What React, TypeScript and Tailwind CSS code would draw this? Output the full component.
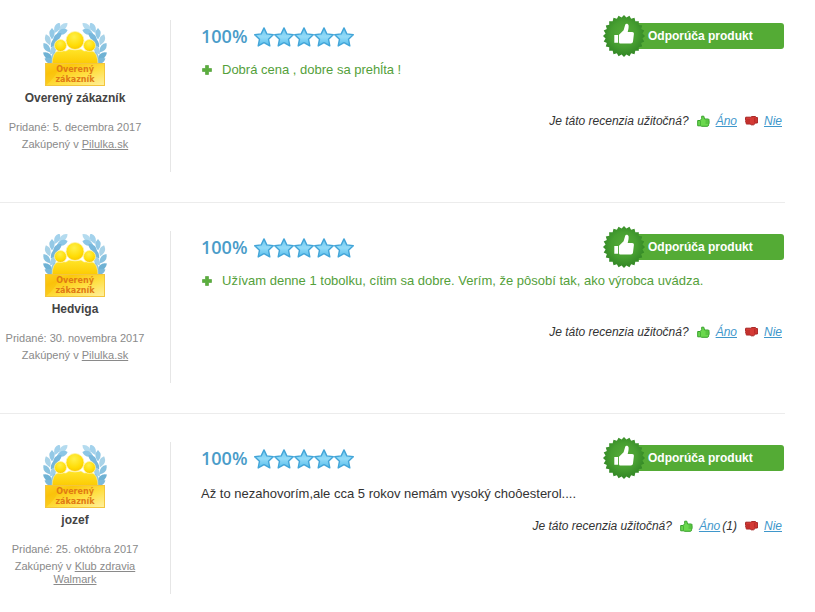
import React from 'react';

interface Review {
  id: number;
  name: string;
  added: string;
  shop: string;
  rating: number;
  pros?: string;
  text?: string;
  yesVotes?: number;
}

const REVIEWS: Review[] = [
  {
    id: 1,
    name: 'Overený zákazník',
    added: '5. decembra 2017',
    shop: 'Pilulka.sk',
    rating: 100,
    pros: 'Dobrá cena , dobre sa prehĺta !',
  },
  {
    id: 2,
    name: 'Hedviga',
    added: '30. novembra 2017',
    shop: 'Pilulka.sk',
    rating: 100,
    pros: 'Užívam denne 1 tobolku, cítim sa dobre. Verím, že pôsobí tak, ako výrobca uvádza.',
  },
  {
    id: 3,
    name: 'jozef',
    added: '25. októbra 2017',
    shop: 'Klub zdravia Walmark',
    rating: 100,
    text: 'Až to nezahovorím,ale cca 5 rokov nemám vysoký choôesterol....',
    yesVotes: 1,
  },
];

// One side of the laurel wreath: [x, y, rotation, fill]
const LEAVES: [number, number, number, string][] = [
  [20, 4, 50, '#b4dbef'],
  [14, 5, 25, '#a3d2ec'],
  [19, 9, 70, '#8cc6e6'],
  [9, 11, 0, '#93c9e6'],
  [14, 14, 50, '#79b8dc'],
  [5, 17, -20, '#a9d3e8'],
  [11, 20, 35, '#76b6da'],
  [4, 25, -35, '#8ac3e0'],
  [10, 27, 30, '#9fcfe8'],
  [5, 33, -55, '#6fb2d4'],
  [11, 34, 10, '#8fc6e4'],
  [7, 38, -65, '#7cb9d8'],
];

const Laurel: React.FC = () => (
  <>
    {LEAVES.map(([x, y, angle, fill]) => (
      <path
        key={`${x}-${y}`}
        d="M0 -6Q5.500 -1 0 5.500Q-5.500 -1 0 -6Z"
        fill={fill}
        transform={`translate(${x} ${y}) rotate(${angle})`}
      />
    ))}
  </>
);

const VerifiedBadge: React.FC = () => (
  <svg width="64" height="64" viewBox="0 0 64 64" role="img" aria-label="Overený zákazník">
    <defs>
      <radialGradient id="head" cx="0.45" cy="0.3" r="0.7">
        <stop offset="0" stopColor="#fff04a" />
        <stop offset="0.7" stopColor="#ffdc05" />
        <stop offset="1" stopColor="#f9c800" />
      </radialGradient>
      <linearGradient id="body" x1="0" y1="0" x2="0" y2="1">
        <stop offset="0" stopColor="#ffe528" />
        <stop offset="1" stopColor="#fcc800" />
      </linearGradient>
      <linearGradient id="ribbon" x1="0" y1="0" x2="1" y2="1">
        <stop offset="0" stopColor="#ffdf35" />
        <stop offset="0.25" stopColor="#fbc70c" />
        <stop offset="0.6" stopColor="#ffe045" />
        <stop offset="1" stopColor="#fff0a0" />
      </linearGradient>
    </defs>
    <Laurel />
    <g transform="translate(64 0) scale(-1 1)">
      <Laurel />
    </g>
    <path
      d="M9 42q0-13 7-14.500l7 .5 3-2q6 2 12 0l3 2 7-.5q7 1.500 7 14.500z"
      fill="url(#body)"
      stroke="#fff3a8"
      strokeWidth="0.6"
    />
    <circle cx="17.500" cy="22.500" r="6" fill="url(#head)" stroke="#fff3a8" strokeWidth="0.8" />
    <circle cx="46.500" cy="22.500" r="6" fill="url(#head)" stroke="#fff3a8" strokeWidth="0.8" />
    <circle cx="32" cy="17.500" r="9" fill="url(#head)" stroke="#fff3a8" strokeWidth="0.8" />
    <rect x="2.5" y="40.5" width="59" height="22" fill="url(#ribbon)" stroke="#f3c53c" />
    <path d="M3 62V41h14Q13 55 3 62z" fill="#f9bd08" opacity="0.5" />
    <g
      textAnchor="middle"
      fontSize="8"
      fontWeight="700"
      fill="#e07a14"
      fontFamily="'DejaVu Sans', sans-serif"
    >
      <text x="32" y="49">Overený</text>
      <text x="32" y="59">zákazník</text>
    </g>
  </svg>
);

const Stars: React.FC = () => (
  <svg width="100" height="22" viewBox="0 0 100 22" aria-hidden="true">
    <defs>
      <linearGradient id="star" x1="0" y1="0" x2="0" y2="1">
        <stop offset="0" stopColor="#6cc6ee" />
        <stop offset="0.5" stopColor="#93dbf8" />
        <stop offset="1" stopColor="#55bdec" />
      </linearGradient>
    </defs>
    {[0, 20, 40, 60, 80].map((x) => (
      <path
        key={x}
        d="M10 .9l2.800 6 6.500.8-4.800 4.500 1.300 6.700-5.800-3.300-5.800 3.300 1.300-6.700L.7 7.700l6.500-.8z"
        transform={`translate(${x} 2)`}
        fill="url(#star)"
        stroke="#43a5d8"
        strokeWidth="1.4"
        strokeLinejoin="round"
      />
    ))}
  </svg>
);

const PlusIcon: React.FC = () => (
  <svg width="10" height="10" viewBox="0 0 10 10" className="shrink-0" aria-hidden="true">
    <path d="M3.5 0.5h3v3h3v3h-3v3h-3v-3h-3v-3h3z" fill="#5aae3d" stroke="#4c9c31" strokeWidth="0.6" />
  </svg>
);

// Outline of the round seal with pointed teeth
const sealPoints = Array.from({ length: 48 }, (_, i) => {
  const r = i % 2 === 0 ? 21 : 18.6;
  const a = (i * Math.PI) / 24;
  return `${(21 + r * Math.cos(a)).toFixed(2)},${(21 + r * Math.sin(a)).toFixed(2)}`;
}).join(' ');

const Seal: React.FC = () => (
  <svg width="42" height="42" viewBox="0 0 42 42" className="absolute -top-2 -left-[21px]" aria-hidden="true">
    <defs>
      <radialGradient id="seal" cx="0.5" cy="0.45" r="0.5">
        <stop offset="0" stopColor="#55ac38" />
        <stop offset="0.6" stopColor="#479f31" />
        <stop offset="1" stopColor="#358a27" />
      </radialGradient>
    </defs>
    <polygon points={sealPoints} fill="url(#seal)" />
    <path
      d="M11.300 20h3.800v7.800h-3.800zM16 19.800l4.600-4.600 1.600-5.400c.5-1.600 3.200-1.200 3.400.8.200 2-.3 4.200-.9 6.400h4.400c1.400 0 1.900.8 1.800 2l-.9 7.600c-.2 1.300-1 1.800-2.200 1.800H17.500c-1 0-1.500-.5-1.500-1.500z"
      fill="#fff"
    />
  </svg>
);

const ThumbUp: React.FC = () => (
  <svg width="13" height="12" viewBox="0 0 13 12" className="shrink-0" aria-hidden="true">
    <path
      d="M.7 5.500h2.600L4.700 3.500V1.200h2.100L7.500 4h4q1 .7.400 2 .7 1 0 2 .4 1-.4 1.700 0 1.600-1 1.600H4.600L3.300 10.800H.7z"
      fill="#6bd84e"
      stroke="#36a02a"
    />
    <path d="M3.400 6v4.500M8.500 6h3M8.500 8h3" fill="none" stroke="#36a02a" strokeWidth="0.7" />
  </svg>
);

const ThumbDown: React.FC = () => (
  <svg width="13" height="12" viewBox="0 0 13 12" className="shrink-0" aria-hidden="true">
    <path
      d="M.7 2.200h5l1-.6h3.800l.7.9h1.200v5.500h-1.700L8.500 9.800H6.200L5.200 9H1.600Q.6 8.500 1 7.500.2 6.500.8 5.500.1 4 .7 3z"
      fill="#d43a35"
      stroke="#a32020"
    />
    <path d="M1.500 5h3.500M1.500 7h3.500M9.800 3v4.500" fill="none" stroke="#a32020" strokeWidth="0.7" />
  </svg>
);

const ReviewItem: React.FC<{ review: Review }> = ({ review }) => (
  <article className="flex border-b border-[#ececec] pt-7 pb-[30px] first:pt-5 last:border-b-0">
    <div className="flex w-[171px] shrink-0 border-r border-[#e6e6e6]">
      <div className="flex min-h-[152px] w-[150px] flex-col items-center pt-[3px] text-center">
        <VerifiedBadge />
        <h3 className="mt-[3px] text-[12px] leading-4 font-bold text-[#444]">{review.name}</h3>
        <div className="mt-3 px-2 text-[11px] text-[#8a8a8a]">
          <p className="whitespace-nowrap leading-[18px]">Pridané: {review.added}</p>
          <p className="pt-[2px] leading-[13px]">
            Zakúpený v{' '}
            <a href="#" className="underline">
              {review.shop}
            </a>
          </p>
        </div>
      </div>
    </div>

    <div className="min-w-0 flex-1 pl-[30px]">
      <div className="flex items-start justify-between">
        <div className="flex items-center gap-[7px] pt-1">
          <span className="font-['Open_Sans',sans-serif] text-[18px] leading-6 font-semibold text-[#4a9cc9]">
            {review.rating}%
          </span>
          <Stars />
        </div>
        <div className="relative mt-[3px] mr-px h-[26px] w-[160px] rounded-[3px] bg-[#54ab35] pl-6 text-[12px] leading-[26px] font-bold text-white">
          <Seal />
          Odporúča produkt
        </div>
      </div>

      {review.pros && (
        <p className="mt-[11px] flex items-center gap-[10px] pl-px text-[13px] leading-5 text-[#54a03a]">
          <PlusIcon />
          {review.pros}
        </p>
      )}
      {review.text && <p className="mt-[13px] text-[13px] leading-5 text-[#333]">{review.text}</p>}

      <div
        className={`flex items-center justify-end pr-[3px] text-[12px] leading-4 text-[#333] italic ${
          review.text ? 'mt-[14px]' : 'mt-[33px]'
        }`}
      >
        <span className="mr-2">Je táto recenzia užitočná?</span>
        <ThumbUp />
        <a href="#" className="ml-[6px] text-[#3f97cb] underline">
          Áno
        </a>
        {review.yesVotes && <span className="ml-[2px]">({review.yesVotes})</span>}
        <span className="ml-2 flex items-center gap-[6px]">
          <ThumbDown />
          <a href="#" className="text-[#3f97cb] underline">
            Nie
          </a>
        </span>
      </div>
    </div>
  </article>
);

const App: React.FC = () => (
  <main className="mr-[30px] bg-white font-['Liberation_Sans',Arial,sans-serif]">
    {REVIEWS.map((review) => (
      <ReviewItem key={review.id} review={review} />
    ))}
  </main>
);

export default App;
